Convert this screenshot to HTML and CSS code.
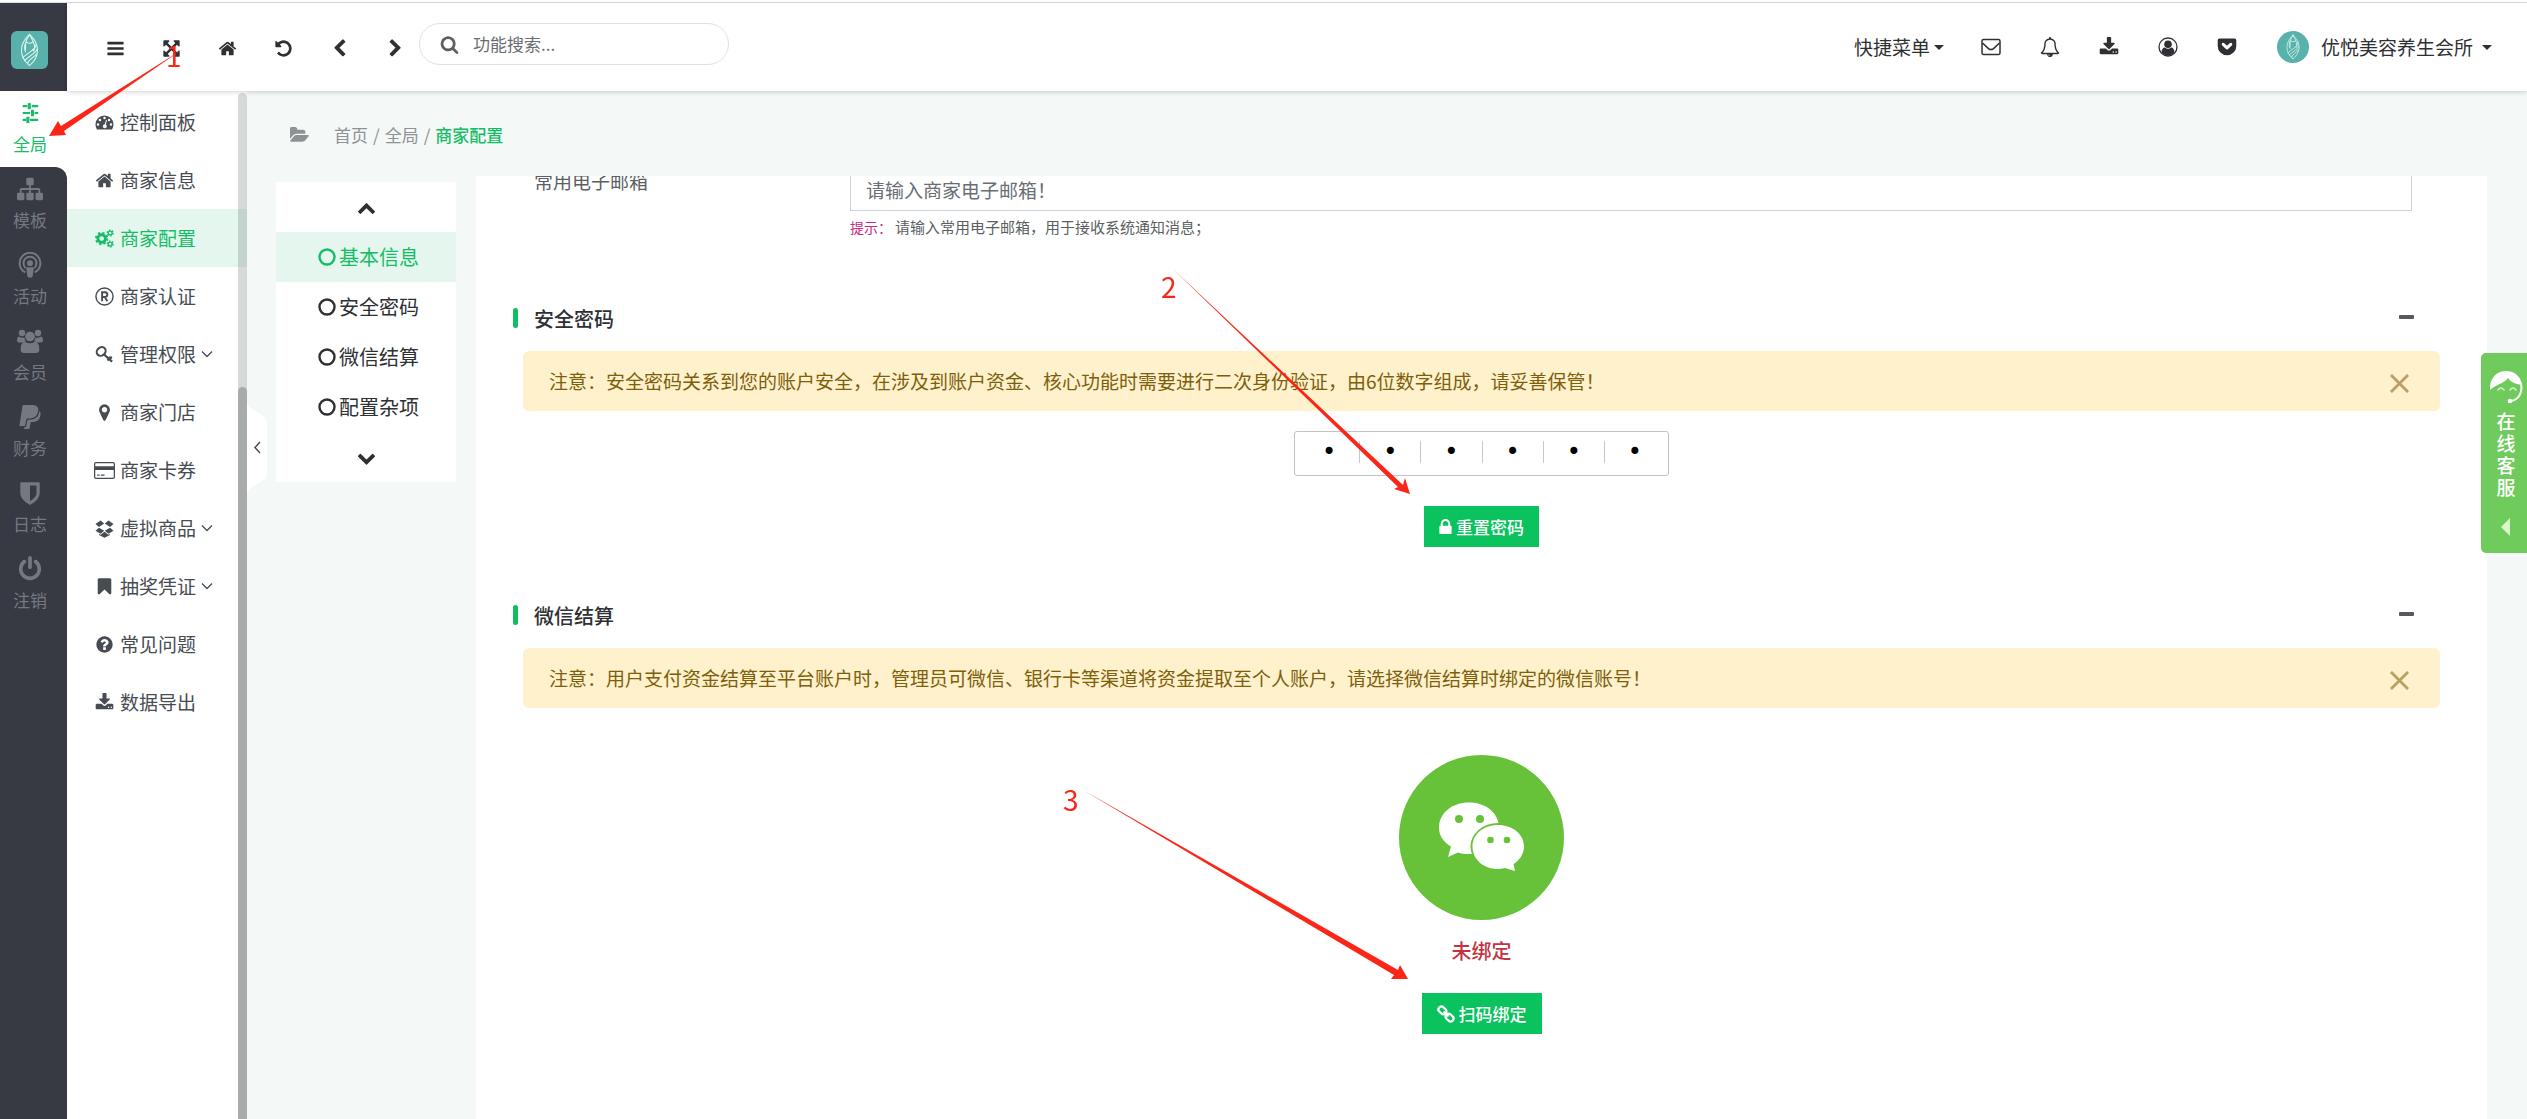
FILE: index.html
```html
<!DOCTYPE html>
<html lang="zh-CN">
<head>
<meta charset="utf-8">
<meta name="viewport" content="width=device-width, initial-scale=1">
<title>商家配置</title>
<link rel="stylesheet" href="styles.css">
</head>
<body>
<svg class="sprite" aria-hidden="true">
  <symbol id="i-logo" viewBox="0 0 38 38"><g fill="none" stroke="#d9f5f0" stroke-width="1.1" stroke-linecap="round"><path d="M19 3C8 13 8 26 19 35C30 26 30 13 19 3Z"/><path d="M19 3C13 13 13 18 15 21M19 3C25 13 25 18 23 20M16 11q3 2 6 0M12 27C16 22 25 20 26 13M14 30C18 25 25 23 27 18M17 33C18 28 24 27 26 23M15 12v7"/></g></symbol>
  <symbol id="i-bars" viewBox="0 0 1792 1792"><path d="M1664 1344v128q0 26-19 45t-45 19h-1408q-26 0-45-19t-19-45v-128q0-26 19-45t45-19h1408q26 0 45 19t19 45zm0-512v128q0 26-19 45t-45 19h-1408q-26 0-45-19t-19-45v-128q0-26 19-45t45-19h1408q26 0 45 19t19 45zm0-512v128q0 26-19 45t-45 19h-1408q-26 0-45-19t-19-45v-128q0-26 19-45t45-19h1408q26 0 45 19t19 45z"/></symbol>
  <symbol id="i-expand" viewBox="0 0 1792 1792"><path d="M1411 541l-355 355 355 355 144-144q29-31 70-14 39 17 39 59v448q0 26-19 45t-45 19h-448q-42 0-59-40-17-39 14-69l144-144-355-355-355 355 144 144q31 30 14 69-17 40-59 40h-448q-26 0-45-19t-19-45v-448q0-42 40-59 39-17 69 14l144 144 355-355-355-355-144 144q-19 19-45 19-12 0-24-5-40-17-40-59v-448q0-26 19-45t45-19h448q42 0 59 40 17 39-14 69l-144 144 355 355 355-355-144-144q-31-30-14-69 17-40 59-40h448q26 0 45 19t19 45v448q0 42-39 59-13 5-25 5-26 0-45-19z"/></symbol>
  <symbol id="i-home" viewBox="0 0 1792 1792"><path d="M1472 992v480q0 26-19 45t-45 19h-384v-384h-256v384h-384q-26 0-45-19t-19-45v-480q0-1 .5-3t.5-3l575-474 575 474q1 2 1 6zm223-69l-62 74q-8 9-21 11h-3q-13 0-21-7l-692-577-692 577q-12 8-24 7-13-2-21-11l-62-74q-8-10-7-23.5t11-21.5l719-599q32-26 76-26t76 26l244 204v-195q0-14 9-23t23-9h192q14 0 23 9t9 23v408l219 182q10 8 11 21.5t-7 23.5z"/></symbol>
  <symbol id="i-undo" viewBox="0 0 1792 1792"><path d="M1664 896q0 156-61 298t-164 245-245 164-298 61q-172 0-327-72.500t-264-204.500q-7-10-6.500-22.500t8.500-20.500l137-138q10-9 25-9 16 2 23 12 73 95 179 147t225 52q104 0 198.500-40.500t163.500-109.500 109.500-163.500 40.500-198.500-40.500-198.500-109.500-163.500-163.500-109.500-198.500-40.500q-98 0-188 35.500t-160 101.500l137 138q31 30 14 69-17 40-59 40h-448q-26 0-45-19t-19-45v-448q0-42 40-59 39-17 69 14l130 129q107-101 244.500-156.500t284.500-55.500q156 0 298 61t245 164 164 245 61 298z"/></symbol>
  <symbol id="i-left" viewBox="0 0 1792 1792"><path d="M1427 301l-531 531 531 531q19 19 19 45t-19 45l-166 166q-19 19-45 19t-45-19l-742-742q-19-19-19-45t19-45l742-742q19-19 45-19t45 19l166 166q19 19 19 45t-19 45z"/></symbol>
  <symbol id="i-right" viewBox="0 0 1792 1792"><path d="M1363 877l-742 742q-19 19-45 19t-45-19l-166-166q-19-19-19-45t19-45l531-531-531-531q-19-19-19-45t19-45l166-166q19-19 45-19t45 19l742 742q19 19 19 45t-19 45z"/></symbol>
  <symbol id="i-up" viewBox="0 0 1792 1792"><path d="M1683 1331l-166 165q-19 19-45 19t-45-19l-531-531-531 531q-19 19-45 19t-45-19l-166-165q-19-19-19-45.500t19-45.500l742-741q19-19 45-19t45 19l742 741q19 19 19 45.500t-19 45.500z"/></symbol>
  <symbol id="i-down" viewBox="0 0 1792 1792"><path transform="rotate(180 896 1030)" d="M1683 1331l-166 165q-19 19-45 19t-45-19l-531-531-531 531q-19 19-45 19t-45-19l-166-165q-19-19-19-45.500t19-45.500l742-741q19-19 45-19t45 19l742 741q19 19 19 45.500t-19 45.500z"/></symbol>
  <symbol id="i-search" viewBox="0 0 1792 1792"><path d="M1216 832q0-185-131.500-316.500t-316.500-131.500-316.500 131.500-131.500 316.500 131.500 316.500 316.500 131.500 316.500-131.500 131.500-316.500zm512 832q0 52-38 90t-90 38q-54 0-90-38l-343-342q-179 124-399 124-143 0-273.500-55.500t-225-150-150-225-55.500-273.500 55.500-273.500 150-225 225-150 273.500-55.500 273.500 55.500 225 150 150 225 55.500 273.500q0 220-124 399l343 343q37 37 37 90z"/></symbol>
  <symbol id="i-mail" viewBox="0 0 20 20"><g fill="none" stroke="currentColor" stroke-width="1.500" stroke-linejoin="round"><rect x="1" y="2.500" width="18" height="15" rx="1.600"/><path d="M1.500 6L7.500 11.600Q10 13.600 12.500 11.600L18.500 6"/></g></symbol>
  <symbol id="i-bell" viewBox="0 0 1792 1792"><path d="M912 1696q0-16-16-16-59 0-101.500-42.500t-42.500-101.500q0-16-16-16t-16 16q0 73 51.500 124.500t124.500 51.500q16 0 16-16zm-666-288h1300q-266-300-266-832 0-51-24-105t-69-103-121.500-80.500-169.500-31.500-169.500 31.500-121.500 80.500-69 103-24 105q0 532-266 832zm1482 0q0 52-38 90t-90 38h-448q0 106-75 181t-181 75-181-75-75-181h-448q-52 0-90-38t-38-90q50-42 91-88t85-119.500 74.500-158.500 50-206 19.500-260q0-152 117-282.500t307-158.500q-8-19-8-39 0-40 28-68t68-28 68 28 28 68q0 20-8 39 190 28 307 158.500t117 282.500q0 139 19.500 260t50 206 74.500 158.500 85 119.500 91 88z"/></symbol>
  <symbol id="i-download" viewBox="0 0 1792 1792"><path d="M1344 1344q0-26-19-45t-45-19-45 19-19 45 19 45 45 19 45-19 19-45zm256 0q0-26-19-45t-45-19-45 19-19 45 19 45 45 19 45-19 19-45zm128-224v320q0 40-28 68t-68 28h-1472q-40 0-68-28t-28-68v-320q0-40 28-68t68-28h465l135 136q58 56 136 56t136-56l136-136h464q40 0 68 28t28 68zm-325-569q17 41-14 70l-448 448q-18 19-45 19t-45-19l-448-448q-31-29-14-70 17-39 59-39h256v-448q0-26 19-45t45-19h256q26 0 45 19t19 45v448h256q42 0 59 39z"/></symbol>
  <symbol id="i-user" viewBox="0 0 20 20"><circle cx="10" cy="10" r="9" fill="none" stroke="currentColor" stroke-width="1.300"/><circle cx="10" cy="7.300" r="3.800"/><path d="M3.500 15.200C3.800 12 5 10.500 6.800 10.400Q10 13.200 13.200 10.400C15 10.500 16.200 12 16.500 15.200Q14 18.500 10 18.500T3.500 15.200Z"/></symbol>
  <symbol id="i-pocket" viewBox="0 0 20 20"><path fill-rule="evenodd" d="M2.500 1.500h15Q19.300 1.500 19.300 3.300V9a9.300 9.300 0 0 1-18.600 0V3.300Q.7 1.500 2.500 1.500ZM5.300 6Q4 7.200 5.200 8.400L9.200 12.200q.8.700 1.600 0L14.800 8.400Q16 7.200 14.700 6 13.700 5.300 12.700 6.200L10 8.800 7.300 6.200Q6.300 5.300 5.300 6Z"/></symbol>
  <symbol id="i-folder" viewBox="0 0 1920 1792"><path d="M1815 952q0 31-31 66l-336 396q-43 51-120.500 86.500t-143.500 35.500h-1088q-34 0-60.500-13t-26.500-43q0-31 31-66l336-396q43-51 120.500-86.500t143.500-35.500h1088q34 0 60.500 13t26.500 43zm-343-344v160h-832q-94 0-197 47.500t-164 119.500l-337 396-5 6q0-4-.5-12.500t-.5-12.500v-960q0-92 66-158t158-66h320q92 0 158 66t66 158v32h544q92 0 158 66t66 158z"/></symbol>
  <symbol id="i-sliders" viewBox="0 0 24 24"><g stroke="currentColor" stroke-width="2.200" fill="none"><path d="M4 4.500h5M14 4.500h7M4 12h8M17 12h4M4 19.500h4M12 19.500h9"/></g><rect x="9.500" y="1" width="3.400" height="7" rx="1"/><rect x="13" y="8.500" width="3.400" height="7" rx="1"/><rect x="8" y="16" width="3.400" height="7" rx="1"/></symbol>
  <symbol id="i-sitemap" viewBox="0 0 1792 1792"><path d="M1792 1248v320q0 40-28 68t-68 28h-320q-40 0-68-28t-28-68v-320q0-40 28-68t68-28h96v-192h-512v192h96q40 0 68 28t28 68v320q0 40-28 68t-68 28h-320q-40 0-68-28t-28-68v-320q0-40 28-68t68-28h96v-192h-512v192h96q40 0 68 28t28 68v320q0 40-28 68t-68 28h-320q-40 0-68-28t-28-68v-320q0-40 28-68t68-28h96v-192q0-52 38-90t90-38h512v-192h-96q-40 0-68-28t-28-68v-320q0-40 28-68t68-28h320q40 0 68 28t28 68v320q0 40-28 68t-68 28h-96v192h512q52 0 90 38t38 90v192h96q40 0 68 28t28 68z"/></symbol>
  <symbol id="i-podcast" viewBox="0 0 24 24"><g fill="none" stroke="currentColor" stroke-width="1.800"><path d="M7.600 18.800A9.600 9.600 0 1 1 16.400 18.800"/><path d="M8 14.800A6 6 0 1 1 16 14.800"/></g><circle cx="12" cy="10.300" r="2.700"/><path d="M9.200 14h5.600q.8 0 .7.900l-1 7.300q-.2 1.600-2.500 1.600t-2.500-1.600l-1-7.300q-.1-.9.700-.9Z"/></symbol>
  <symbol id="i-users" viewBox="0 0 26 24"><circle cx="5" cy="4" r="3.200"/><circle cx="21" cy="4" r="3.200"/><circle cx="13" cy="7.500" r="4.800"/><path d="M1.800 7.500Q5 9.600 7.400 8.200 7.400 10.500 9 12.300 7 12.600 6 13.500H2Q0 13.500 0 11.500 0 8 1.800 7.500ZM24.200 7.500Q21 9.600 18.600 8.200 18.600 10.500 17 12.300 19 12.600 20 13.500H24Q26 13.500 26 11.500 26 8 24.200 7.500ZM8 12.700Q13 16 18 12.700 22.400 13.500 22.400 20.500 22.400 24 19 24H7Q3.600 24 3.600 20.500 3.600 13.500 8 12.700Z"/></symbol>
  <symbol id="i-paypal" viewBox="0 0 24 26"><path d="M5.500 1H14.500C19.500 1 21 4 20 8 19 12.500 15.500 14.500 11 14.500H9.500Q8.600 14.500 8.300 15.500L7 22H2Q1.300 22 1.500 21L4.500 2Q4.700 1 5.500 1Z"/><path d="M21.300 7C23 8.500 22.800 11 22 13 21 16.500 18 18 14.500 18H13.500Q12.700 18 12.500 19L11.700 24Q11.500 25 10.500 25H6.700Q6 25 6.200 24L6.400 23H8L9.300 16.200Q9.500 15.700 10 15.700H11.500C17 15.700 20.800 13 21.300 7Z"/></symbol>
  <symbol id="i-shield" viewBox="0 0 24 24"><path fill-rule="evenodd" d="M4 2H20Q21 2 21 3V12Q21 18.500 12 23 3 18.500 3 12V3Q3 2 4 2ZM12 5V19.500Q18 16 18 12V5Z"/></symbol>
  <symbol id="i-power" viewBox="0 0 1792 1792"><path d="M1664 896q0 156-61 298t-164 245-245 164-298 61-298-61-245-164-164-245-61-298q0-182 80.500-343t226.500-270q43-32 95.500-25t83.500 50q32 42 24.500 94.500t-49.500 84.500q-98 74-151.500 181t-53.500 228q0 104 40.500 198.500t109.500 163.500 163.500 109.500 198.500 40.500 198.500-40.500 163.500-109.500 109.500-163.500 40.500-198.500q0-121-53.500-228t-151.500-181q-42-32-49.500-84.500t24.500-94.500q31-43 84-50t95 25q146 109 226.500 270t80.500 343zm-640-768v640q0 52-38 90t-90 38-90-38-38-90v-640q0-52 38-90t90-38 90 38 38 90z"/></symbol>
  <symbol id="i-gauge" viewBox="0 0 20 20"><path fill-rule="evenodd" d="M10 2.500A9.500 9.500 0 0 0 .5 12Q.5 14.700 2 17 2.300 17.400 2.700 17.400H17.300Q17.700 17.400 18 17 19.500 14.700 19.500 12A9.500 9.500 0 0 0 10 2.500ZM10 4a1.300 1.300 0 1 1 0 2.600A1.300 1.300 0 0 1 10 4ZM5.200 6a1.300 1.300 0 1 1 0 2.600 1.300 1.300 0 0 1 0-2.600ZM14.800 6a1.300 1.300 0 1 1 0 2.600 1.300 1.300 0 0 1 0-2.600ZM3.200 10.800a1.300 1.300 0 1 1 0 2.600 1.300 1.300 0 0 1 0-2.600ZM16.800 10.800a1.300 1.300 0 1 1 0 2.600 1.300 1.300 0 0 1 0-2.600ZM11.600 7.400L12.600 7.700 11.400 12.200A2.100 2.100 0 1 1 10.300 11.900Z"/></symbol>
  <symbol id="i-cogs" viewBox="0 0 20 20"><circle cx="7" cy="10" r="4" fill="none" stroke="currentColor" stroke-width="3"/><circle cx="7" cy="10" r="6" fill="none" stroke="currentColor" stroke-width="2" stroke-dasharray="2.400 2.310"/><g fill="none" stroke="currentColor"><circle cx="16" cy="4.200" r="2" stroke-width="1.500"/><circle cx="16" cy="4.200" r="3.100" stroke-width="1.400" stroke-dasharray="1.600 1.640"/><circle cx="16" cy="15.800" r="2" stroke-width="1.500"/><circle cx="16" cy="15.800" r="3.100" stroke-width="1.400" stroke-dasharray="1.600 1.640"/></g></symbol>
  <symbol id="i-reg" viewBox="0 0 20 20"><circle cx="10" cy="10" r="9" fill="none" stroke="currentColor" stroke-width="1.500"/><path d="M7.500 15V5.500H10.600Q13 5.600 13 8T10.600 10.500H7.500M10.300 10.500L13 15" fill="none" stroke="currentColor" stroke-width="2"/></symbol>
  <symbol id="i-key" viewBox="0 0 20 20"><g fill="none" stroke="currentColor"><ellipse cx="6.500" cy="6.800" rx="5" ry="4.200" stroke-width="2.200" transform="rotate(-40 6.500 6.800)"/><path d="M9.500 10L18 17.500M13.200 16.400L15.400 13.800M18 13.200L14.500 13.200" stroke-width="2.400"/></g></symbol>
  <symbol id="i-marker" viewBox="0 0 1792 1792"><path d="M1152 640q0-106-75-181t-181-75-181 75-75 181 75 181 181 75 181-75 75-181zm256 0q0 109-33 179l-364 774q-16 33-47.500 52t-67.500 19-67.500-19-46.500-52l-365-774q-33-70-33-179 0-212 150-362t362-150 362 150 150 362z"/></symbol>
  <symbol id="i-card" viewBox="0 0 20 16"><rect x=".6" y=".6" width="18.800" height="14.800" rx="1.300" fill="none" stroke="currentColor" stroke-width="1.200"/><path d="M1 4h18v3.600H1zM3 11.800h2.300v1.300H3zM6.500 11.800h3.500v1.300H6.500z"/></symbol>
  <symbol id="i-dropbox" viewBox="0 0 20 20"><path d="M5.800 1.500L9.700 4.800 4.200 8.500.5 5.300ZM14.200 1.500L10.300 4.800 15.800 8.500 19.500 5.300ZM4.200 9.300L.5 12.300 5.800 15.600 9.700 12.400ZM15.800 9.300L19.500 12.300 14.200 15.600 10.300 12.400ZM10 13.300L14.200 16.700 15.800 15.700V16.800L10 19.800 4.200 16.800V15.700L5.800 16.700Z"/></symbol>
  <symbol id="i-bookmark" viewBox="0 0 1792 1792"><path d="M1420 128q23 0 44 9 33 13 52.500 41t19.500 62v1289q0 34-19.500 62t-52.500 41q-19 8-44 8-48 0-83-32l-441-424-441 424q-36 33-83 33-23 0-44-9-33-13-52.500-41t-19.500-62v-1289q0-34 19.500-62t52.500-41q21-9 44-9h1048z"/></symbol>
  <symbol id="i-help" viewBox="0 0 1792 1792"><path d="M1024 1376v-192q0-14-9-23t-23-9h-192q-14 0-23 9t-9 23v192q0 14 9 23t23 9h192q14 0 23-9t9-23zm256-672q0-88-55.500-163t-138.500-116-170-41q-243 0-371 213-15 24 8 42l132 100q7 6 19 6 16 0 25-12 53-68 86-92 34-24 86-24 48 0 85.500 26t37.500 59q0 38-20 61t-68 45q-63 28-115.500 86.500t-52.500 125.500v36q0 14 9 23t23 9h192q14 0 23-9t9-23q0-19 21.500-49.500t54.500-49.500q32-18 49-28.500t46-35 44.500-48 28-60.500 12.500-81zm384 192q0 209-103 385.500t-279.500 279.500-385.500 103-385.500-103-279.500-279.500-103-385.500 103-385.500 279.500-279.500 385.500-103 385.500 103 279.500 279.500 103 385.500z"/></symbol>
  <symbol id="i-lock" viewBox="320 128 1152 1408"><path d="M640 768h512v-192q0-106-75-181t-181-75-181 75-75 181v192zm832 96v576q0 40-28 68t-68 28h-960q-40 0-68-28t-28-68v-576q0-40 28-68t68-28h32v-192q0-184 132-316t316-132 316 132 132 316v192h32q40 0 68 28t28 68z"/></symbol>
  <symbol id="i-link" viewBox="0 0 20 20"><g fill="none" stroke="currentColor" stroke-width="2.500" stroke-linecap="round"><rect x="1.300" y="2.700" width="9.400" height="6.600" rx="3.300" transform="rotate(42 6 6)"/><rect x="9.300" y="10.700" width="9.400" height="6.600" rx="3.300" transform="rotate(42 14 14)"/><path d="M8 8L12 12"/></g></symbol>
  <symbol id="i-circle" viewBox="0 0 20 20"><circle cx="10" cy="10" r="7.500" fill="none" stroke="currentColor" stroke-width="2.400"/></symbol>
  <symbol id="i-angle" viewBox="0 0 12 12"><path d="M1 3.500L6 8.500 11 3.500" fill="none" stroke="currentColor" stroke-width="1.300"/></symbol>
  <symbol id="i-close" viewBox="0 0 20 20"><path d="M1 1L19 19M19 1L1 19" fill="none" stroke="currentColor" stroke-width="3"/></symbol>
</svg>

<div class="app">
  <nav class="rail" aria-label="主导航">
    <a class="rail-logo" href="#"><svg><use href="#i-logo"/></svg></a>
    <a class="rail-item active" href="#"><svg><use href="#i-sliders"/></svg>全局</a>
    <div class="rail-rest">
      <a class="rail-item" href="#"><svg><use href="#i-sitemap"/></svg>模板</a>
      <a class="rail-item" href="#"><svg><use href="#i-podcast"/></svg>活动</a>
      <a class="rail-item" href="#"><svg><use href="#i-users"/></svg>会员</a>
      <a class="rail-item" href="#"><svg><use href="#i-paypal"/></svg>财务</a>
      <a class="rail-item" href="#"><svg><use href="#i-shield"/></svg>日志</a>
      <a class="rail-item" href="#"><svg><use href="#i-power"/></svg>注销</a>
    </div>
  </nav>

  <div class="stage">
    <header class="topbar">
      <div class="tools">
        <button aria-label="菜单"><svg><use href="#i-bars"/></svg></button>
        <button aria-label="全屏"><svg><use href="#i-expand"/></svg></button>
        <button aria-label="主页"><svg><use href="#i-home"/></svg></button>
        <button aria-label="刷新"><svg><use href="#i-undo"/></svg></button>
        <button aria-label="后退"><svg><use href="#i-left"/></svg></button>
        <button aria-label="前进"><svg><use href="#i-right"/></svg></button>
      </div>
      <label class="search"><svg><use href="#i-search"/></svg><input type="text" placeholder="功能搜索..." aria-label="功能搜索"></label>
      <div class="quick">
        <button class="drop">快捷菜单<span class="caret"></span></button>
        <button class="ico" aria-label="邮件"><svg><use href="#i-mail"/></svg></button>
        <button class="ico" aria-label="通知"><svg><use href="#i-bell"/></svg></button>
        <button class="ico" aria-label="下载"><svg><use href="#i-download"/></svg></button>
        <button class="ico" aria-label="用户"><svg><use href="#i-user"/></svg></button>
        <button class="ico" aria-label="收藏"><svg><use href="#i-pocket"/></svg></button>
        <button class="drop account"><span class="avatar"><svg><use href="#i-logo"/></svg></span>优悦美容养生会所<span class="caret"></span></button>
      </div>
    </header>

    <div class="body">
      <nav class="submenu" aria-label="全局">
        <a href="#"><svg><use href="#i-gauge"/></svg>控制面板</a>
        <a href="#"><svg><use href="#i-home"/></svg>商家信息</a>
        <a class="active" href="#"><svg><use href="#i-cogs"/></svg>商家配置</a>
        <a href="#"><svg><use href="#i-reg"/></svg>商家认证</a>
        <a href="#"><svg><use href="#i-key"/></svg>管理权限<svg class="angle"><use href="#i-angle"/></svg></a>
        <a href="#"><svg><use href="#i-marker"/></svg>商家门店</a>
        <a href="#"><svg><use href="#i-card"/></svg>商家卡券</a>
        <a href="#"><svg><use href="#i-dropbox"/></svg>虚拟商品<svg class="angle"><use href="#i-angle"/></svg></a>
        <a href="#"><svg><use href="#i-bookmark"/></svg>抽奖凭证<svg class="angle"><use href="#i-angle"/></svg></a>
        <a href="#"><svg><use href="#i-help"/></svg>常见问题</a>
        <a href="#"><svg><use href="#i-download"/></svg>数据导出</a>
        <span class="track"><span class="thumb"></span></span>
        <button class="fold" aria-label="收起"><svg viewBox="0 0 20 92"><path class="fold-bg" d="M0 0Q2 7 10 10Q20 14 20 23V69Q20 78 10 82Q2 85 0 92Z"/><path class="fold-arrow" d="M13 40L8 45.500L13 51"/></svg></button>
      </nav>

      <main class="content">
        <nav class="crumbs" aria-label="面包屑">
          <svg><use href="#i-folder"/></svg>
          <a href="#">首页</a><span>/</span><a href="#">全局</a><span>/</span><b>商家配置</b>
        </nav>
        <div class="columns">
          <nav class="steps" aria-label="配置分类">
            <button aria-label="上一项"><svg><use href="#i-up"/></svg></button>
            <a class="active" href="#"><svg><use href="#i-circle"/></svg>基本信息</a>
            <a href="#"><svg><use href="#i-circle"/></svg>安全密码</a>
            <a href="#"><svg><use href="#i-circle"/></svg>微信结算</a>
            <a href="#"><svg><use href="#i-circle"/></svg>配置杂项</a>
            <button aria-label="下一项"><svg><use href="#i-down"/></svg></button>
          </nav>

          <form class="panel">
            <div class="row">
              <label for="email">常用电子邮箱</label>
              <div class="field">
                <input id="email" type="text" placeholder="请输入商家电子邮箱！">
                <p class="hint"><code>提示：</code>请输入常用电子邮箱，用于接收系统通知消息；</p>
              </div>
            </div>

            <section class="block">
              <div class="head"><h2>安全密码</h2><button type="button" class="minus" aria-label="折叠"></button></div>
              <div class="alert"><p>注意：安全密码关系到您的账户安全，在涉及到账户资金、核心功能时需要进行二次身份验证，由6位数字组成，请妥善保管！</p><button type="button" aria-label="关闭"><svg><use href="#i-close"/></svg></button></div>
              <div class="inner">
                <div class="pin">
                  <input type="password" maxlength="1" value="0" aria-label="第1位">
                  <input type="password" maxlength="1" value="0" aria-label="第2位">
                  <input type="password" maxlength="1" value="0" aria-label="第3位">
                  <input type="password" maxlength="1" value="0" aria-label="第4位">
                  <input type="password" maxlength="1" value="0" aria-label="第5位">
                  <input type="password" maxlength="1" value="0" aria-label="第6位">
                </div>
                <button type="button" class="primary"><svg class="lock"><use href="#i-lock"/></svg>重置密码</button>
              </div>
            </section>

            <section class="block">
              <div class="head"><h2>微信结算</h2><button type="button" class="minus" aria-label="折叠"></button></div>
              <div class="alert"><p>注意：用户支付资金结算至平台账户时，管理员可微信、银行卡等渠道将资金提取至个人账户，请选择微信结算时绑定的微信账号！</p><button type="button" aria-label="关闭"><svg><use href="#i-close"/></svg></button></div>
              <div class="inner">
                <svg class="wechat" viewBox="0 0 165 165" role="img" aria-label="微信">
                  <circle cx="82.500" cy="82.500" r="82.500" fill="#67c23a"/>
                  <path d="M49 102L52 91.500C44 87 40 80 40 73C40 58 53 47.500 70 47.500C87 47.500 100 58 100 73C100 88 87 99 70 99C66 99 62 98.500 59 97.500Z" fill="#fff"/>
                  <ellipse cx="99" cy="91.500" rx="27.500" ry="23.500" fill="#67c23a"/>
                  <path d="M116 116L106 113Q102.500 114 99 114C84 114 73.500 104 73.500 91.500C73.500 79.500 84 70 99 70C114 70 125 79.500 125 91.500C125 98.500 121 105 114.500 109Z" fill="#fff"/>
                  <g fill="#67c23a"><circle cx="60" cy="64" r="4"/><circle cx="81" cy="64" r="4"/><circle cx="91.500" cy="85" r="3.300"/><circle cx="108" cy="85" r="3.300"/></g>
                </svg>
                <p class="state">未绑定</p>
                <button type="button" class="primary"><svg><use href="#i-link"/></svg>扫码绑定</button>
              </div>
            </section>
          </form>
        </div>
      </main>
    </div>
  </div>
</div>

<button class="service">
  <svg class="agent" viewBox="0 0 34 34"><path d="M1 20C0 8 8 1 17 1C26 1 32 7 33 15L28 14C24 13 21 11 19 8C15 14 7 14 1 20Z" fill="#fff"/><g fill="none" stroke="#fff" stroke-linecap="round"><path d="M32 14C34 23 29 30 22 31" stroke-width="2"/><path d="M9 20Q12 16 15 20M21 20Q24 16 27 20" stroke-width="1.500" opacity=".7"/></g><circle cx="21" cy="31" r="2.300" fill="#fff"/></svg>
  <span>在线客服</span>
  <svg class="tri" viewBox="0 0 10 18"><path d="M0 9L9 0V18Z" fill="#d8f8c8"/></svg>
</button>

<svg class="notes">
  <g fill="#fb2617">
    <path d="M183 49L61 126L58 121L49 136L66 135L64 131Z"/>
    <path d="M1173 269L1403 485L1405 478L1410 494L1394 489L1398 487Z"/>
    <path d="M1083 790L1398 970L1400 965L1408 979L1391 979L1394 975Z"/>
  </g>
  <g class="nums"><text x="166" y="67">1</text><text x="1161" y="298">2</text><text x="1063" y="811">3</text></g>
</svg>
</body>
</html>
```
FILE: styles.css
```css
* { box-sizing: border-box; }
body {
  margin: 0;
  font: 19px/28px "Noto Sans CJK SC", sans-serif;
  color: #2e3033;
  background: #fff;
}
a { color: inherit; text-decoration: none; }
button { border: 0; padding: 0; background: none; font: inherit; color: inherit; }
input { font: inherit; color: inherit; }
p, h2 { margin: 0; }
svg { display: block; width: 20px; height: 20px; fill: currentColor; flex: none; }
.sprite { position: absolute; width: 0; height: 0; }

.app { display: flex; height: 100vh; overflow: hidden; border-top: 2px solid #fff; padding-top: 1px; box-shadow: inset 0 1px #dde0e3; }

/* Dark rail */
.rail { width: 67px; flex: none; display: flex; flex-direction: column; background: #fff; }
.rail-logo { height: 88px; background: #373a42; display: flex; align-items: center; padding: 6px 0 0 11px; }
.rail-logo svg { width: 37px; height: 38px; border-radius: 6px; background: #58b2ab; }
.rail-item { height: 76px; width: 60px; padding-top: 9px; display: flex; flex-direction: column; align-items: center; gap: 5px; font-size: 17px; line-height: 26px; color: #747980; }
.rail-item svg { width: 26px; height: 26px; }
.rail-item.active { color: #15bd67; }
.rail-item.active svg { width: 22px; }
.rail-rest { flex: 1; background: #373a42; border-radius: 0 12px 0 0; }

/* Header */
.stage { flex: 1; min-width: 0; display: flex; flex-direction: column; }
.topbar { height: 88px; flex: none; display: flex; align-items: center; background: #fff; box-shadow: 0 1px 5px rgba(0, 0, 0, .18); position: relative; z-index: 2; }
.tools { display: flex; padding-left: 20px; padding-top: 2px; }
.tools button { width: 56px; display: flex; justify-content: center; }
.tools svg { width: 19px; height: 19px; }
.search { width: 310px; height: 42px; margin: 0 0 6px -4px; border: 1px solid #dfe2e4; border-radius: 21px; display: flex; align-items: center; padding: 0 20px; gap: 14px; color: #5b5f63; }
.search svg { width: 19px; height: 19px; }
.search input { border: 0; outline: 0; background: none; width: 100%; min-width: 0; padding: 0; font-size: 17px; }
::placeholder { color: #696e73; opacity: 1; }
.quick { margin-left: auto; display: flex; align-items: center; padding: 0 35px 0 0; }
.drop { display: flex; align-items: center; white-space: nowrap; }
.ico { width: 59px; display: flex; justify-content: center; }
.caret { border: 5px solid transparent; border-top-color: currentColor; border-bottom: 0; margin-left: 4px; }
.quick .drop:first-child { margin-right: 18px; }
.account { margin-left: 20px; }
.account .caret { margin-left: 9px; }
.avatar { margin-right: 12px; border-radius: 50%; background: #58b2ab; }
.avatar svg { width: 32px; height: 32px; padding: 2px; }

/* Second-level menu */
.body { flex: 1; min-height: 0; display: flex; }
.submenu { width: 180px; flex: none; position: relative; padding-top: 2px; color: #474c52; background: #fff; z-index: 1; }
.submenu a { height: 58px; display: flex; align-items: center; padding-left: 27px; gap: 5px; }
.submenu a svg:first-child { height: 19px; width: 21px; }
.submenu a .angle { width: 12px; height: 12px; }
.submenu .active { background: #e4f6ed; color: #15bd67; }
.track { position: absolute; top: 2px; bottom: 0; right: 0; width: 9px; padding-top: 294px; border-radius: 5px 5px 0 0; background: rgba(150, 160, 158, .4); display: flex; }
.thumb { flex: 1; background: #a7abaa; border-radius: 5px 5px 0 0; }
.fold { position: absolute; left: 180px; top: 311px; }
.fold svg { width: 20px; height: 92px; }
.fold-bg { fill: #fff; }
.fold-arrow { fill: none; stroke: #4a4e52; stroke-width: 1.5; }

/* Content */
.content { flex: 1; min-width: 0; display: flex; flex-direction: column; background: #f4f8f7; padding: 0 40px 0 29px; }
.crumbs { height: 85px; flex: none; display: flex; align-items: center; padding: 2px 0 0 14px; gap: 5px; font-size: 17px; color: #8f9294; }
.crumbs svg { width: 20px; height: 20px; margin-right: 19px; }
.crumbs b { font-weight: 500; color: #15bd67; }
.columns { flex: 1; min-height: 0; display: flex; gap: 20px; }
.steps { width: 180px; flex: none; align-self: flex-start; margin-top: 6px; background: #fff; font-size: 20px; }
.steps > * { height: 50px; width: 100%; display: flex; align-items: center; justify-content: center; gap: 2px; }
.steps > a { padding-left: 4px; }
.steps button svg { width: 19px; height: 19px; }
.steps .active { background: #e4f6ed; color: #15bd67; }

.panel { flex: 1; min-width: 0; background: #fff; overflow: hidden; padding: 0 47px 0 37px; }
.row { display: flex; margin: -15px 28px 0 21px; height: 138px; color: #5b5f63; }
.row label { width: 316px; flex: none; padding-top: 6px; }
.field { flex: 1; }
.field input { display: block; width: 100%; height: 50px; border: 1px solid #cdd3d8; padding: 7px 15px 0; }
.hint { font-size: 15px; line-height: 24px; padding-top: 4px; display: flex; gap: 3px; }
.hint code { font: 14px/24px "Noto Sans CJK SC", sans-serif; color: #c92a80; }

.head { height: 52px; display: flex; justify-content: space-between; padding: 6px 26px 0 0; }
.head h2 { font-size: 20px; line-height: 28px; font-weight: 500; display: flex; gap: 16px; }
.head h2::before { content: ""; width: 5px; height: 20px; margin-top: 3px; border-radius: 3px; background: #10bd61; }
.minus { width: 15px; height: 4px; margin-top: 10px; border-radius: 1px; background: #55585c; }
.alert { margin-left: 10px; height: 60px; border-radius: 6px; background: #fff1cc; color: #7d5f0c; display: flex; align-items: center; justify-content: space-between; padding: 0 31px 0 26px; }
.alert svg { width: 19px; height: 19px; margin-top: 5px; color: #b9a164; }
.inner { margin-left: 10px; display: flex; flex-direction: column; align-items: center; }
.pin { width: 375px; height: 45px; margin-top: 20px; border: 1px solid #c0c2c4; border-radius: 3px; display: flex; padding: 9px 3px; }
.pin input { flex: 1; min-width: 0; height: 22px; border: 0; border-left: 1px solid #c5c7c9; padding: 0; text-align: center; background: none; color: #000; font: 24px/22px "DejaVu Sans", sans-serif; }
.pin input:first-child { border-left-color: transparent; }
.primary { display: flex; align-items: center; gap: 4px; height: 41px; padding: 0 15px; background: #0ac25e; color: #fff; font-size: 17px; font-weight: 500; }
.primary svg { width: 18px; height: 18px; }
.primary .lock { width: 13px; height: 15px; }
.pin + .primary { margin: 30px 0 49px; }
.wechat { width: 165px; height: 165px; margin-top: 47px; }
.state { font-size: 20px; line-height: 28px; font-weight: 500; color: #c3333f; margin: 17px 0 28px; }

/* Floating customer service */
.service { position: fixed; right: 0; top: 353px; z-index: 3; width: 46px; height: 200px; border-radius: 5px 0 0 5px; background: #6fcb5c; color: #fff; display: flex; flex-direction: column; align-items: center; padding: 17px 0 0 4px; }
.service .agent { width: 34px; height: 34px; }
.service span { width: 19px; margin-top: 6px; font-size: 19px; line-height: 22px; font-weight: 500; }
.service .tri { width: 10px; height: 18px; margin-top: 20px; }

/* Guide arrows */
.notes { position: absolute; left: 0; top: 0; z-index: 4; width: 100%; height: 100%; pointer-events: none; }
.nums { font: 28px "Noto Sans CJK SC", sans-serif; fill: #fb2617; }
```
